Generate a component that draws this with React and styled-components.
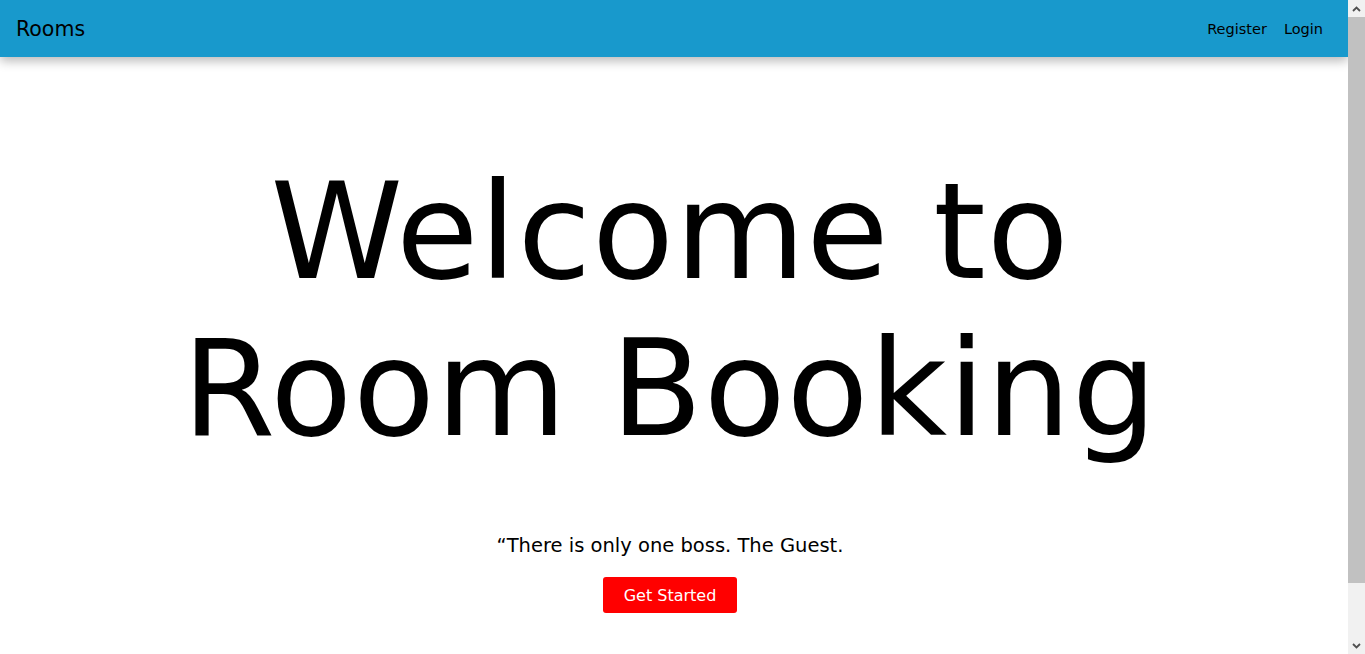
import React from "react";
import styled, { createGlobalStyle } from "styled-components";

const GlobalStyle = createGlobalStyle`
  html, body {
    margin: 0;
    padding: 0;
    background: #fff;
    font-family: "DejaVu Sans", "Noto Sans", sans-serif;
    color: #000;
  }
  body { padding-right: 17px; }
  * { box-sizing: border-box; }
`;

const Navbar = styled.nav`
  height: 57px;
  background: #1899cc;
  display: flex;
  align-items: center;
  justify-content: space-between;
  padding: 0 25px 0 16px;
  box-shadow: 0 4px 10px rgba(0, 0, 0, 0.28);
  position: relative;
  z-index: 1;
`;

const Brand = styled.a`
  font-size: 20.5px;
  color: #000;
  text-decoration: none;
`;

const NavLinks = styled.div`
  display: flex;
  gap: 17px;
`;

const NavLink = styled.a`
  font-size: 14.5px;
  color: #000;
  text-decoration: none;
  cursor: pointer;
`;

const Hero = styled.section`
  display: flex;
  flex-direction: column;
  align-items: center;
  text-align: center;
  padding: 97px 8px 103px 0;
`;

const Title = styled.h1`
  margin: 0;
  font-size: 134px;
  font-weight: 400;
  line-height: 157px;
  letter-spacing: 0.9px;
`;

const Quote = styled.p`
  margin: 64px 0 17px;
  font-size: 19.5px;
  line-height: 28px;
`;

const StartButton = styled.button`
  background: #ff0000;
  color: #fff;
  border: none;
  border-radius: 3px;
  width: 134px;
  height: 36px;
  font-family: inherit;
  font-size: 16px;
  cursor: pointer;
`;

const Scrollbar = styled.div`
  position: fixed;
  top: 0;
  right: 0;
  width: 17px;
  height: 100vh;
  background: #f1f1f1;
  display: flex;
  flex-direction: column;
  z-index: 10;
`;

const ScrollArrow = styled.div`
  height: 17px;
  display: flex;
  align-items: center;
  justify-content: center;
`;

const ScrollThumb = styled.div`
  height: 566px;
  background: #c1c1c1;
`;

const ScrollTrack = styled.div`
  flex: 1;
`;

export default function App() {
  return (
    <>
      <GlobalStyle />
      <Navbar>
        <Brand>Rooms</Brand>
        <NavLinks>
          <NavLink>Register</NavLink>
          <NavLink>Login</NavLink>
        </NavLinks>
      </Navbar>
      <Hero>
        <Title>
          Welcome to
          <br />
          Room Booking
        </Title>
        <Quote>“There is only one boss. The Guest.</Quote>
        <StartButton>Get Started</StartButton>
      </Hero>
      <Scrollbar>
        <ScrollArrow>
          <svg width="9" height="6" viewBox="0 0 9 6">
            <path d="M1 5 L4.5 1.5 L8 5" stroke="#505050" strokeWidth="1.8" fill="none" />
          </svg>
        </ScrollArrow>
        <ScrollThumb />
        <ScrollTrack />
        <ScrollArrow>
          <svg width="9" height="6" viewBox="0 0 9 6">
            <path d="M1 1 L4.5 4.5 L8 1" stroke="#505050" strokeWidth="1.8" fill="none" />
          </svg>
        </ScrollArrow>
      </Scrollbar>
    </>
  );
}
